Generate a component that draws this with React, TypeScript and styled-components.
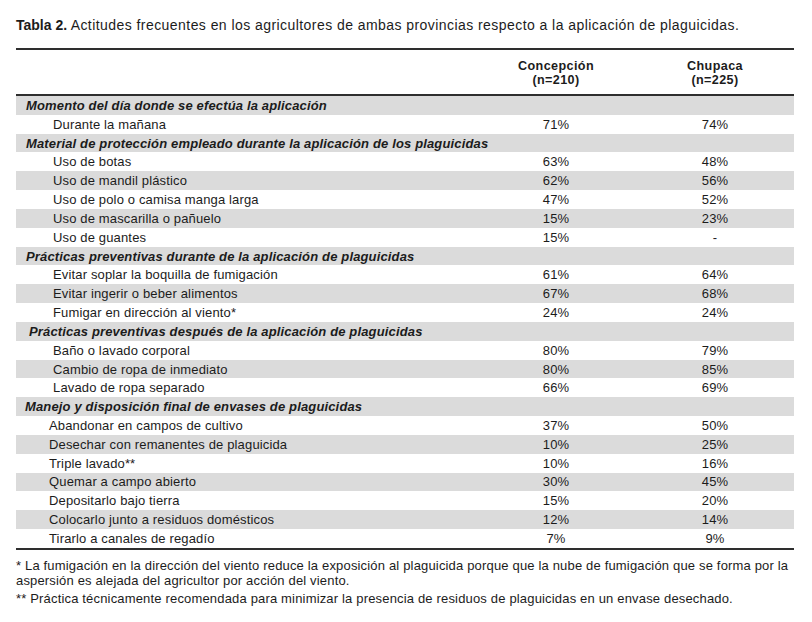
import React from "react";
import styled, { createGlobalStyle } from "styled-components";

const Global = createGlobalStyle`
  html, body { margin: 0; padding: 0; background: #ffffff; }
  body { font-family: "Liberation Sans", Arial, sans-serif; color: #1c1c1c; }
`;

const Page = styled.div`
  width: 812px;
  height: 622px;
  padding: 17px 18px 0 16px;
  box-sizing: border-box;
`;

const Title = styled.div`
  font-size: 14px;
  line-height: 16px;
  height: 16px;
  letter-spacing: 0.44px;
  white-space: nowrap;
`;

const Bold = styled.span`
  font-weight: bold;
  letter-spacing: 0;
`;

const Table = styled.div`
  margin-top: 15px;
  border-top: 2px solid #2e2e2e;
  border-bottom: 2px solid #2e2e2e;
`;

const HeaderRow = styled.div`
  display: grid;
  grid-template-columns: 460px 160px 1fr;
  height: 44px;
  border-bottom: 2px solid #2e2e2e;
  align-items: center;
`;

const HeadCell = styled.div`
  text-align: center;
  font-weight: bold;
  font-size: 12.6px;
  line-height: 14px;
  letter-spacing: 0.4px;
  padding-top: 2px;
`;

const Body = styled.div`
  display: grid;
  grid-auto-rows: 18.83px;
`;

const Row = styled.div<{ $shade: boolean }>`
  display: grid;
  grid-template-columns: 460px 160px 1fr;
  align-items: center;
  background: ${(p) => (p.$shade ? "#dbdbdb" : "#ffffff")};
  font-size: 13px;
  line-height: 15px;
  letter-spacing: 0.15px;
`;

const Label = styled.div<{ $indent: number; $section: boolean }>`
  padding-left: ${(p) => p.$indent}px;
  font-weight: ${(p) => (p.$section ? "bold" : "normal")};
  font-style: ${(p) => (p.$section ? "italic" : "normal")};
  white-space: nowrap;
`;

const Value = styled.div`
  text-align: center;
`;

const Notes = styled.div`
  margin: 8px -8px 0 0;
  font-size: 13px;
  line-height: 15.5px;
  letter-spacing: 0.17px;
`;

const Note = styled.p<{ $gap?: number }>`
  margin: ${(p) => p.$gap ?? 0}px 0 0 0;
`;

type R = { label: string; a?: string; b?: string; section?: boolean; indent: number };

const rows: R[] = [
  { label: "Momento del día donde se efectúa la aplicación", section: true, indent: 10 },
  { label: "Durante la mañana", a: "71%", b: "74%", indent: 37 },
  { label: "Material de protección empleado durante la aplicación de los plaguicidas", section: true, indent: 10 },
  { label: "Uso de botas", a: "63%", b: "48%", indent: 37 },
  { label: "Uso de mandil plástico", a: "62%", b: "56%", indent: 37 },
  { label: "Uso de polo o camisa manga larga", a: "47%", b: "52%", indent: 37 },
  { label: "Uso de mascarilla o pañuelo", a: "15%", b: "23%", indent: 37 },
  { label: "Uso de guantes", a: "15%", b: "-", indent: 37 },
  { label: "Prácticas preventivas durante de la aplicación de plaguicidas", section: true, indent: 10 },
  { label: "Evitar soplar la boquilla de fumigación", a: "61%", b: "64%", indent: 37 },
  { label: "Evitar ingerir o beber alimentos", a: "67%", b: "68%", indent: 37 },
  { label: "Fumigar en dirección al viento*", a: "24%", b: "24%", indent: 37 },
  { label: "Prácticas preventivas después de la aplicación de plaguicidas", section: true, indent: 13 },
  { label: "Baño o lavado corporal", a: "80%", b: "79%", indent: 37 },
  { label: "Cambio de ropa de inmediato", a: "80%", b: "85%", indent: 37 },
  { label: "Lavado de ropa separado", a: "66%", b: "69%", indent: 37 },
  { label: "Manejo y disposición final de envases de plaguicidas", section: true, indent: 9 },
  { label: "Abandonar en campos de cultivo", a: "37%", b: "50%", indent: 33 },
  { label: "Desechar con remanentes de plaguicida", a: "10%", b: "25%", indent: 33 },
  { label: "Triple lavado**", a: "10%", b: "16%", indent: 33 },
  { label: "Quemar a campo abierto", a: "30%", b: "45%", indent: 33 },
  { label: "Depositarlo bajo tierra", a: "15%", b: "20%", indent: 33 },
  { label: "Colocarlo junto a residuos domésticos", a: "12%", b: "14%", indent: 33 },
  { label: "Tirarlo a canales de regadío", a: "7%", b: "9%", indent: 33 },
];

export default function App() {
  return (
    <>
      <Global />
      <Page>
        <Title>
          <Bold>Tabla 2.</Bold> Actitudes frecuentes en los agricultores de ambas provincias respecto a la aplicación de plaguicidas.
        </Title>
        <Table>
          <HeaderRow>
            <div />
            <HeadCell>
              Concepción
              <br />
              (n=210)
            </HeadCell>
            <HeadCell>
              Chupaca
              <br />
              (n=225)
            </HeadCell>
          </HeaderRow>
          <Body>
            {rows.map((r, i) => (
              <Row key={i} $shade={i % 2 === 0}>
                <Label $indent={r.indent} $section={!!r.section}>
                  {r.label}
                </Label>
                <Value>{r.a ?? ""}</Value>
                <Value>{r.b ?? ""}</Value>
              </Row>
            ))}
          </Body>
        </Table>
        <Notes>
          <Note>
            * La fumigación en la dirección del viento reduce la exposición al plaguicida porque que la nube de fumigación que se forma por la aspersión es alejada del agricultor por acción del viento.
          </Note>
          <Note $gap={2}>
            ** Práctica técnicamente recomendada para minimizar la presencia de residuos de plaguicidas en un envase desechado.
          </Note>
        </Notes>
      </Page>
    </>
  );
}
